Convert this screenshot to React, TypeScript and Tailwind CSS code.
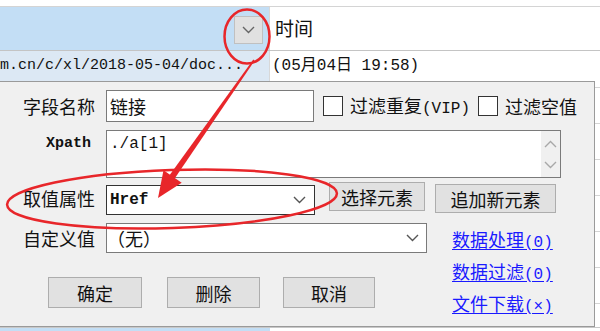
const cjk = "font-['Noto_Sans_CJK_SC',sans-serif]";
const mono = "font-['Liberation_Mono','Noto_Sans_CJK_SC',monospace]";

function Chevron({ className = "" }: { className?: string }) {
  return (
    <svg width="13" height="8" viewBox="0 0 13 8" className={className}>
      <polyline points="1,1 6.5,6.5 12,1" fill="none" stroke="currentColor" strokeWidth="1.4" />
    </svg>
  );
}

function Btn({ label, className = "" }: { label: string; className?: string }) {
  return (
    <div
      className={`flex items-center justify-center border border-[#adadad] bg-[#e1e1e1] text-[18px] leading-none text-[#111] ${cjk} ${className}`}
    >
      {label}
    </div>
  );
}

function Check() {
  return <div className="h-[20px] w-[20px] shrink-0 border border-[#333] bg-white" />;
}

function Link({ label, tail }: { label: string; tail: string }) {
  return (
    <div className="h-[32px] whitespace-nowrap leading-[32px] text-[#1a1aff] underline underline-offset-2">
      <span className={`text-[18px] ${cjk}`}>{label}</span>
      <span className={`text-[16px] ${mono}`}>{tail}</span>
    </div>
  );
}

export default function App() {
  const rows = [0, 1, 2, 3, 4, 5, 6];
  return (
    <div className="relative h-[331px] w-[600px] overflow-hidden bg-white text-[#111]">
      {/* grid header strip */}
      <div className="h-[7px] border-b border-[#d4d4d4] bg-white" />
      <div className="flex h-[44px] border-b border-[#c4c4c4]">
        <div className="flex w-[270px] items-center justify-end border-r border-[#d8d8d8] bg-[#c3def5] pr-[6px]">
          <div className="mt-[3px] flex h-[28px] w-[29px] items-center justify-center border border-[#c0c0c0] bg-[#e1e1e1] text-[#666]">
            <Chevron />
          </div>
        </div>
        <div className={`flex flex-1 items-center pl-[5px] text-[19px] ${cjk}`}>时间</div>
      </div>
      <div className="flex h-[30px]">
        <div className={`w-[270px] overflow-hidden whitespace-nowrap border-r border-[#d8d8d8] bg-[#dce8f4] pt-[5px] text-[15px] leading-[20px] ${mono}`}>
          m.cn/c/xl/2018-05-04/doc...
        </div>
        <div className={`flex-1 pl-[2px] pt-[5px] text-[16px] leading-[20px] ${mono}`}>(05月04日 19:58)</div>
      </div>

      {/* dialog */}
      <div className="flex h-[246px]">
        <div className="w-[595px] border-y border-r border-[#9a9a9a] bg-[#f0f0f0] pt-[8px]">
          <div className="flex h-[32px] items-center">
            <div className={`w-[95px] text-right text-[18px] ${cjk}`}>字段名称</div>
            <div className={`ml-[11px] flex h-[32px] w-[208px] items-center border border-[#7a7a7a] bg-white pl-[3px] text-[18px] ${cjk}`}>
              链接
            </div>
            <div className="ml-[9px]">
              <Check />
            </div>
            <div className="ml-[7px] whitespace-nowrap">
              <span className={`text-[18px] ${cjk}`}>过滤重复</span>
              <span className={`text-[16px] ${mono}`}>(VIP)</span>
            </div>
            <div className="ml-[8px]">
              <Check />
            </div>
            <div className={`ml-[7px] text-[18px] ${cjk}`}>过滤空值</div>
          </div>

          <div className="mt-[8px] flex">
            <div className={`w-[95px] pr-[4px] pt-[4px] text-right text-[15px] font-bold leading-[20px] ${mono}`}>Xpath</div>
            <div className="ml-[11px] flex h-[48px] w-[455px] border border-[#7a7a7a] bg-white">
              <div className={`flex-1 pl-[3px] pt-[3px] text-[16px] leading-[20px] ${mono}`}>./a[1]</div>
              <div className="flex w-[19px] flex-col items-center justify-around bg-[#f0f0f0] py-[2px] text-[#a8a8a8]">
                <Chevron className="rotate-180" />
                <Chevron />
              </div>
            </div>
          </div>

          <div className="mt-[4px] flex h-[33px] items-start">
            <div className={`w-[95px] pt-[4px] text-right text-[18px] leading-[25px] ${cjk}`}>取值属性</div>
            <div className={`ml-[11px] mt-[3px] flex h-[30px] w-[209px] items-center justify-between border border-[#333] bg-white pl-[3px] pr-[8px] text-[16px] font-bold ${mono}`}>
              <span>Href</span>
              <Chevron className="text-[#555]" />
            </div>
            <Btn label="选择元素" className="ml-[14px] h-[29px] w-[96px]" />
            <Btn label="追加新元素" className="ml-[10px] mt-[2px] h-[29px] w-[121px]" />
          </div>

          <div className="mt-[8px] flex">
            <div className="w-[452px]">
              <div className="flex h-[30px] items-center">
                <div className={`w-[95px] text-right text-[18px] ${cjk}`}>自定义值</div>
                <div className={`ml-[11px] flex h-[30px] w-[321px] items-center justify-between border border-[#7a7a7a] bg-white pr-[7px] text-[18px] ${cjk}`}>
                  <span>（无）</span>
                  <Chevron className="text-[#555]" />
                </div>
              </div>
              <div className="mt-[24px] flex">
                <Btn label="确定" className="ml-[48px] h-[31px] w-[94px]" />
                <Btn label="删除" className="ml-[25px] h-[31px] w-[93px]" />
                <Btn label="取消" className="ml-[23px] h-[31px] w-[92px]" />
              </div>
            </div>
            <div>
              <Link label="数据处理" tail="(0)" />
              <Link label="数据过滤" tail="(0)" />
              <Link label="文件下载" tail="(×)" />
            </div>
          </div>
        </div>
        <div className="flex-1">
          {rows.map((i) => (
            <div key={i} className={`border-b border-[#d4d4d4] ${i === 0 ? "h-[7px]" : "h-[36px]"}`} />
          ))}
        </div>
      </div>
      <div className="flex h-[4px] border-t border-[#c8c8c8]">
        <div className="w-[270px] bg-[#c3def5]" />
      </div>

      {/* red annotations */}
      <svg className="pointer-events-none absolute left-0 top-0" width="600" height="331" viewBox="0 0 600 331">
        <ellipse cx="247" cy="36.5" rx="22.5" ry="27" fill="none" stroke="#e8262a" strokeWidth="2.5" />
        <ellipse cx="172" cy="199" rx="165" ry="29" transform="rotate(-2 172 199)" fill="none" stroke="#e8262a" strokeWidth="2.5" />
        <polygon points="254.7,60.4 253.3,59.6 169.5,175.3 174.5,178.7" fill="#e8262a" />
        <polygon points="163.5,170.3 181.7,182.7 158,198" fill="#e8262a" />
      </svg>
    </div>
  );
}
